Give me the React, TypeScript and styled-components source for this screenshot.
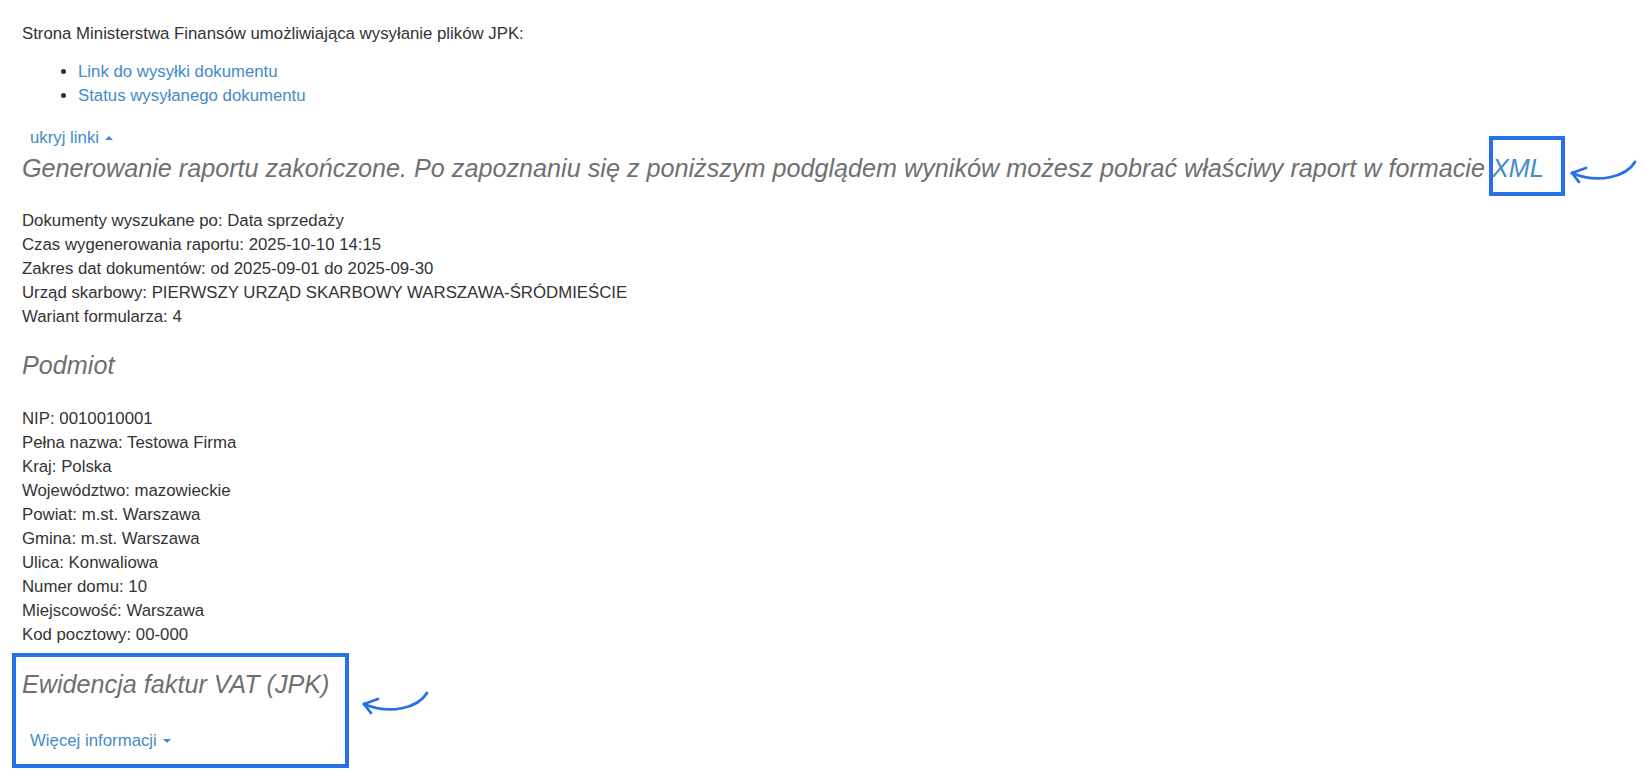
import React from "react";
import styled, { createGlobalStyle } from "styled-components";

const GlobalStyle = createGlobalStyle`
  html, body {
    margin: 0;
    padding: 0;
    background: #fff;
  }
  body {
    font-family: "Liberation Sans", Arial, sans-serif;
    font-size: 16.8px;
    line-height: 24px;
    color: #333;
  }
`;

const documentInfo = [
  "Dokumenty wyszukane po: Data sprzedaży",
  "Czas wygenerowania raportu: 2025-10-10 14:15",
  "Zakres dat dokumentów: od 2025-09-01 do 2025-09-30",
  "Urząd skarbowy: PIERWSZY URZĄD SKARBOWY WARSZAWA-ŚRÓDMIEŚCIE",
  "Wariant formularza: 4",
];

const subjectInfo = [
  "NIP: 0010010001",
  "Pełna nazwa: Testowa Firma",
  "Kraj: Polska",
  "Województwo: mazowieckie",
  "Powiat: m.st. Warszawa",
  "Gmina: m.st. Warszawa",
  "Ulica: Konwaliowa",
  "Numer domu: 10",
  "Miejscowość: Warszawa",
  "Kod pocztowy: 00-000",
];

function CurvedArrow() {
  return (
    <s.Arrow viewBox="0 0 70 28" width={70} height={28}>
      <path d="M67 5 C58 20, 30 27, 4 16" />
      <path d="M4 16 L18 11" />
      <path d="M4 16 L11 25" />
    </s.Arrow>
  );
}

export default function App() {
  return (
    <s.Page>
      <GlobalStyle />
      <s.Intro>Strona Ministerstwa Finansów umożliwiająca wysyłanie plików JPK:</s.Intro>
      <s.LinkList>
        <li>
          <s.Link href="#">Link do wysyłki dokumentu</s.Link>
        </li>
        <li>
          <s.Link href="#">Status wysyłanego dokumentu</s.Link>
        </li>
      </s.LinkList>
      <s.Toggle $top={18}>
        ukryj linki
        <s.Caret $up />
      </s.Toggle>

      <s.Heading $top={5} $bottom={26}>
        Generowanie raportu zakończone. Po zapoznaniu się z poniższym podglądem wyników możesz pobrać właściwy raport
        w formacie{" "}
        <s.XmlLink href="#">
          XML
          <s.XmlArrow>
            <CurvedArrow />
          </s.XmlArrow>
        </s.XmlLink>
      </s.Heading>

      <s.InfoBlock>
        {documentInfo.map((line) => (
          <div key={line}>{line}</div>
        ))}
      </s.InfoBlock>

      <s.Heading $top={23} $bottom={28}>
        Podmiot
      </s.Heading>

      <s.InfoBlock>
        {subjectInfo.map((line) => (
          <div key={line}>{line}</div>
        ))}
      </s.InfoBlock>

      <s.Section>
        <s.Heading $top={24} $bottom={30}>
          Ewidencja faktur VAT (JPK)
        </s.Heading>
        <s.Toggle $top={0}>
          Więcej informacji
          <s.Caret />
        </s.Toggle>
        <s.SectionArrow>
          <CurvedArrow />
        </s.SectionArrow>
      </s.Section>
    </s.Page>
  );
}

const highlight = "#2670e8";

const s = {
  Page: styled.div`
    padding: 22px 22px 40px;
  `,
  Intro: styled.p`
    margin: 0;
  `,
  LinkList: styled.ul`
    margin: 14px 0 0;
    padding-left: 56px;

    li::marker {
      color: #333;
    }
  `,
  Link: styled.a`
    color: #428bca;
    text-decoration: none;
  `,
  Toggle: styled.div<{ $top: number }>`
    display: flex;
    align-items: center;

    margin-top: ${({ $top }) => $top}px;
    padding-left: 8px;

    color: #428bca;
    cursor: pointer;
  `,
  Caret: styled.span<{ $up?: boolean }>`
    display: inline-block;
    width: 0;
    height: 0;
    margin-left: 6px;

    border-left: 4.8px solid transparent;
    border-right: 4.8px solid transparent;
    ${({ $up }) => ($up ? "border-bottom: 4.8px solid #428bca;" : "border-top: 4.8px solid #428bca;")}
  `,
  Heading: styled.h3<{ $top: number; $bottom: number }>`
    margin: ${({ $top }) => $top}px 0 ${({ $bottom }) => $bottom}px;

    font-size: 25.2px;
    line-height: 1.1;
    font-weight: 400;
    font-style: italic;
    color: #6f6f6f;
  `,
  XmlLink: styled.a`
    position: relative;

    color: #428bca;
    text-decoration: none;

    &::after {
      content: "";
      position: absolute;
      top: -18px;
      bottom: -14px;
      left: -3px;
      right: -21px;

      border: 4px solid ${highlight};
    }
  `,
  XmlArrow: styled.span`
    position: absolute;
    top: 3px;
    left: calc(100% + 24px);
    line-height: 0;
  `,
  InfoBlock: styled.div`
    margin: 0;
  `,
  Section: styled.div`
    position: relative;

    &::after {
      content: "";
      position: absolute;
      top: -18px;
      left: -10px;
      width: 337px;
      height: 115px;
      box-sizing: border-box;

      border: 4px solid ${highlight};
      pointer-events: none;
    }
  `,
  SectionArrow: styled.div`
    position: absolute;
    top: 17px;
    left: 338px;
    line-height: 0;
  `,
  Arrow: styled.svg`
    fill: none;
    stroke: ${highlight};
    stroke-width: 2.8;
    stroke-linecap: round;
    stroke-linejoin: round;
  `,
};
